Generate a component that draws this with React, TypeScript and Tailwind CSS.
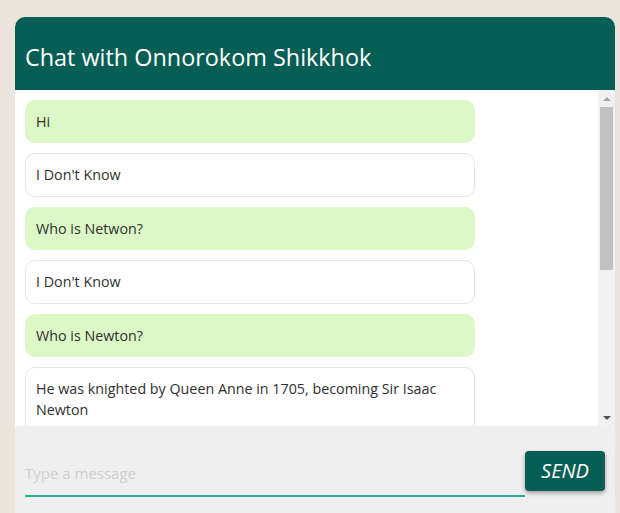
import { useState } from 'react'

type Msg = { from: 'me' | 'bot'; text: string }

const messages: Msg[] = [
  { from: 'me', text: 'Hi' },
  { from: 'bot', text: "I Don't Know" },
  { from: 'me', text: 'Who is Netwon?' },
  { from: 'bot', text: "I Don't Know" },
  { from: 'me', text: 'Who is Newton?' },
  { from: 'bot', text: 'He was knighted by Queen Anne in 1705, becoming Sir Isaac Newton' },
  { from: 'me', text: 'Who is Einstein?' },
  { from: 'bot', text: "I Don't Know" },
  { from: 'me', text: 'Thanks' },
]

function Bubble({ msg }: { msg: Msg }) {
  return (
    <div
      className={`w-[450px] rounded-[10px] px-[10px] py-[10px] text-[14.3px] leading-[21.4px] text-[#303030] ${
        msg.from === 'me' ? 'bg-[#dcf8c6] border border-[#dcf8c6]' : 'bg-white border border-[#ece5dd]'
      }`}
    >
      {msg.text}
    </div>
  )
}

function ScrollBar() {
  return (
    <div className="w-[17px] shrink-0 bg-[#f1f1f1] flex flex-col items-center">
      <div className="h-[17px] flex items-center justify-center">
        <div className="w-0 h-0 border-x-[4px] border-x-transparent border-b-[4px] border-b-[#a3a3a3]" />
      </div>
      <div className="w-[13px] h-[163px] bg-[#c1c1c1]" />
      <div className="flex-1" />
      <div className="h-[17px] flex items-center justify-center">
        <div className="w-0 h-0 border-x-[4px] border-x-transparent border-t-[4px] border-t-[#505050]" />
      </div>
    </div>
  )
}

export default function App() {
  const [text, setText] = useState('')

  return (
    <div className="min-h-[513px] bg-[#ece5dd] pt-[17px] pl-[15px]" style={{ fontFamily: '"Open Sans", sans-serif' }}>
      <div className="w-[600px] rounded-t-[10px] overflow-hidden">
        <div className="h-[73px] bg-[#075e54] flex items-end px-[10px] pb-[21px]">
          <h1 className="text-[23.4px] leading-none text-white">Chat with Onnorokom Shikkhok</h1>
        </div>
        <div className="h-[336px] bg-white flex">
          <div className="flex-1 overflow-y-auto [scrollbar-width:none] flex flex-col gap-[10px] p-[10px]">
            {messages.map((m, i) => (
              <div key={i} className="shrink-0">
                <Bubble msg={m} />
              </div>
            ))}
          </div>
          <ScrollBar />
        </div>
        <div className="bg-[#efefef] flex items-start px-[10px] pt-[25px] pb-[30px]">
          <input
            autoFocus
            value={text}
            onChange={e => setText(e.target.value)}
            placeholder="Type a message"
            className="flex-1 h-[46px] bg-transparent border-b-2 border-[#2aa79b] text-[15px] text-[#303030] caret-black outline-none placeholder:text-[#d0d0d0]"
          />
          <button className="w-[80px] h-[40px] rounded-[4px] bg-[#075e54] text-white italic text-[20px] shadow-[0_2px_4px_rgba(0,0,0,0.35)]">
            SEND
          </button>
        </div>
      </div>
    </div>
  )
}
